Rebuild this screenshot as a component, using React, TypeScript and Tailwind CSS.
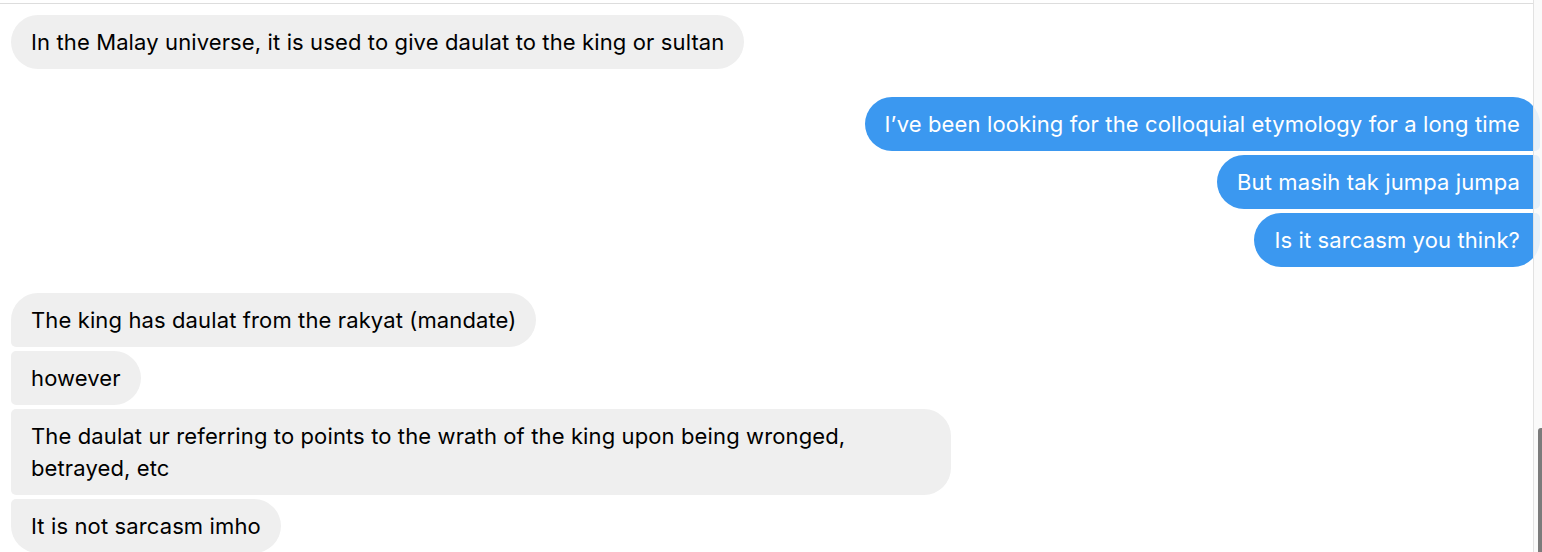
import React from 'react';

type Pos = 'first' | 'middle' | 'last' | 'single';

const Bubble: React.FC<{ mine?: boolean; pos: Pos; children: React.ReactNode }> = ({ mine, pos, children }) => {
  const theirs = {
    first: 'rounded-[27px] rounded-bl-[5px]',
    middle: 'rounded-[27px] rounded-tl-[5px] rounded-bl-[5px]',
    last: 'rounded-[27px] rounded-tl-[5px]',
    single: 'rounded-[27px]',
  };
  const ours = {
    first: 'rounded-[27px] rounded-br-[5px]',
    middle: 'rounded-[27px] rounded-tr-[5px] rounded-br-[5px]',
    last: 'rounded-[27px] rounded-tr-[5px]',
    single: 'rounded-[27px]',
  };
  return (
    <div className={`flex ${mine ? 'justify-end' : 'justify-start'}`}>
      <div
        className={`max-w-[940px] px-5 py-[11px] text-[22px] leading-[32px] tracking-[0.12px] ${
          mine ? `bg-[#3b98f0] text-white ${ours[pos]}` : `bg-[#efefef] text-black ${theirs[pos]}`
        }`}
      >
        {children}
      </div>
    </div>
  );
};

export default function App() {
  return (
    <div className="relative h-[552px] w-[1542px] overflow-hidden bg-white font-['Inter','Liberation_Sans',sans-serif]">
      <div className="h-[3px]" />
      <div className="mr-[9px] border-t border-[#dddddd]" />
      <div className="pl-[11px] pr-[2px] pt-[11px]">
        <Bubble pos="single">In the Malay universe, it is used to give daulat to the king or sultan</Bubble>

        <div className="mt-[28px] flex flex-col gap-[4px]">
          <Bubble mine pos="first">I’ve been looking for the colloquial etymology for a long time</Bubble>
          <Bubble mine pos="middle">But masih tak jumpa jumpa</Bubble>
          <Bubble mine pos="last">Is it sarcasm you think?</Bubble>
        </div>

        <div className="mt-[26px] flex flex-col gap-[4px]">
          <Bubble pos="first">The king has daulat from the rakyat (mandate)</Bubble>
          <Bubble pos="middle">however</Bubble>
          <Bubble pos="middle">
            The daulat ur referring to points to the wrath of the king upon being wronged, betrayed, etc
          </Bubble>
          <Bubble pos="last">It is not sarcasm imho</Bubble>
        </div>
      </div>

      {/* scrollbar overlay */}
      <div className="absolute right-0 top-0 h-full w-[9px] border-l border-[#e2e2e2] bg-[#fafafa]/90">
        <div className="absolute right-0 top-[428px] h-[130px] w-[4px] rounded-tl-[3px] bg-[#7b7b7b]" />
      </div>
    </div>
  );
}
